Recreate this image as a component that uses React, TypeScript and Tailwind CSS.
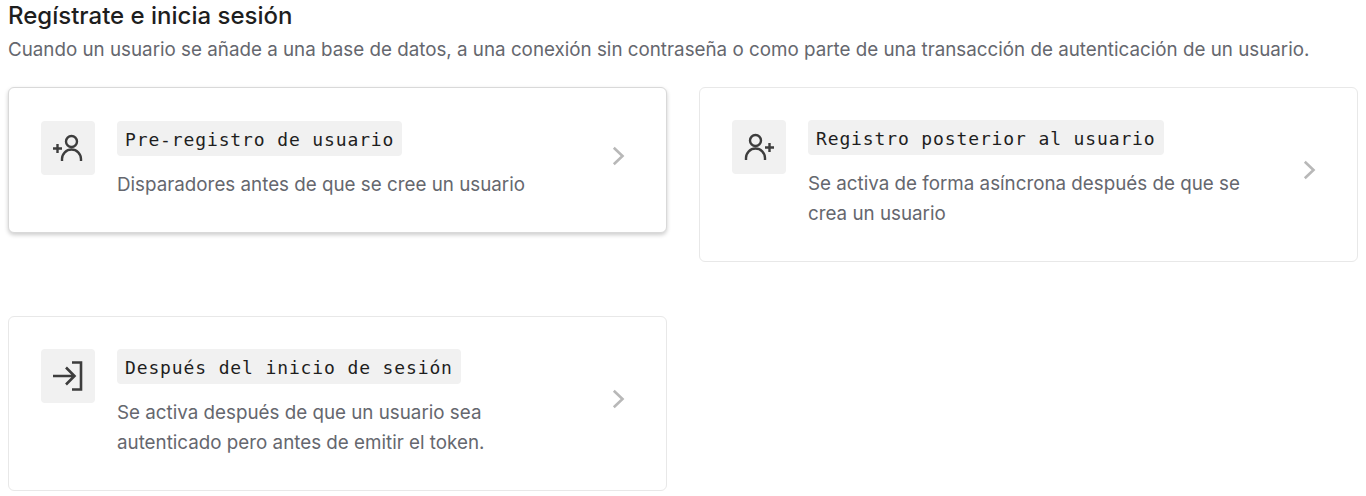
const MONO = "font-['DejaVu_Sans_Mono',monospace]";

function IconBox({ children }: { children: React.ReactNode }) {
    return (
        <div className="w-[54px] h-[54px] shrink-0 rounded-[4px] bg-[#f1f1f1] flex items-center justify-center text-[#3d3d3d]">
            {children}
        </div>
    );
}

function Chevron() {
    return (
        <svg width="13" height="20" viewBox="0 0 13 20" fill="none" className="shrink-0 mb-[9px]">
            <path d="M1.8 1.8 10.5 10 1.8 18.2" stroke="#b8b8b8" strokeWidth="2.6" />
        </svg>
    );
}

interface CardProps {
    icon: React.ReactNode;
    title: string;
    desc: React.ReactNode;
    raised?: boolean;
}

function Card({ icon, title, desc, raised }: CardProps) {
    return (
        <div
            className={
                raised
                    ? "flex items-center min-h-[146px] rounded-[6px] border border-[#d9d9d9] bg-white py-8 pl-8 pr-[41px] shadow-[0_2px_4px_rgba(0,0,0,0.2)]"
                    : "flex items-center rounded-[6px] border border-[#e8e8e8] bg-white py-8 pl-8 pr-[41px]"
            }
        >
            <div className="flex items-start gap-[22px] grow">
                <IconBox>{icon}</IconBox>
                <div>
                    <div className={`inline-block align-top rounded-[4px] bg-[#f1f1f1] px-2 h-[35px] leading-[37px] text-[18px] tracking-[0.87px] text-[#1e1e1e] ${MONO}`}>
                        {title}
                    </div>
                    <p className="mt-[14px] text-[18.8px] leading-[30px] text-[#65676e]">{desc}</p>
                </div>
            </div>
            <Chevron />
        </div>
    );
}

export default function App() {
    return (
        <div className="w-[1366px] h-[496px] overflow-hidden bg-white px-2 font-['Inter',sans-serif]">
            <h2 className="text-[24px] leading-[32px] font-medium text-[#1e1e1e]">
                Regístrate e inicia sesión
            </h2>
            <p className="mt-[3px] text-[18.8px] leading-[30px] whitespace-nowrap text-[#65676e]">
                Cuando un usuario se añade a una base de datos, a una conexión sin contraseña o como parte de una transacción de autenticación de un usuario.
            </p>
            <div className="mt-[22px] grid grid-cols-2 gap-x-8 gap-y-[54px] items-start">
                <Card
                    raised
                    title="Pre-registro de usuario"
                    desc="Disparadores antes de que se cree un usuario"
                    icon={
                        <svg width="30" height="28" viewBox="0 0 30 28" fill="none" stroke="currentColor" strokeWidth="2.4">
                            <circle cx="18.5" cy="7.5" r="5.5" />
                            <path d="M9 27v-2a9.5 9.5 0 0 1 19 0v2" />
                            <path d="M0 14.5h9M4.5 10v9" />
                        </svg>
                    }
                />
                <Card
                    title="Registro posterior al usuario"
                    desc={<>Se activa de forma asíncrona después de que se<br />crea un usuario</>}
                    icon={
                        <svg width="30" height="28" viewBox="0 0 30 28" fill="none" stroke="currentColor" strokeWidth="2.4">
                            <circle cx="11.5" cy="7.5" r="5.5" />
                            <path d="M2 27v-2a9.5 9.5 0 0 1 19 0v2" />
                            <path d="M21 14.5h9M25.5 10v9" />
                        </svg>
                    }
                />
                <Card
                    title="Después del inicio de sesión"
                    desc={<>Se activa después de que un usuario sea<br />autenticado pero antes de emitir el token.</>}
                    icon={
                        <svg width="30" height="30" viewBox="0 0 30 30" fill="none" stroke="currentColor" strokeWidth="2.6">
                            <path d="M19 1.5h9v27h-9" />
                            <path d="M0 15h21M13 6.5l8.5 8.5-8.5 8.5" />
                        </svg>
                    }
                />
            </div>
        </div>
    );
}
